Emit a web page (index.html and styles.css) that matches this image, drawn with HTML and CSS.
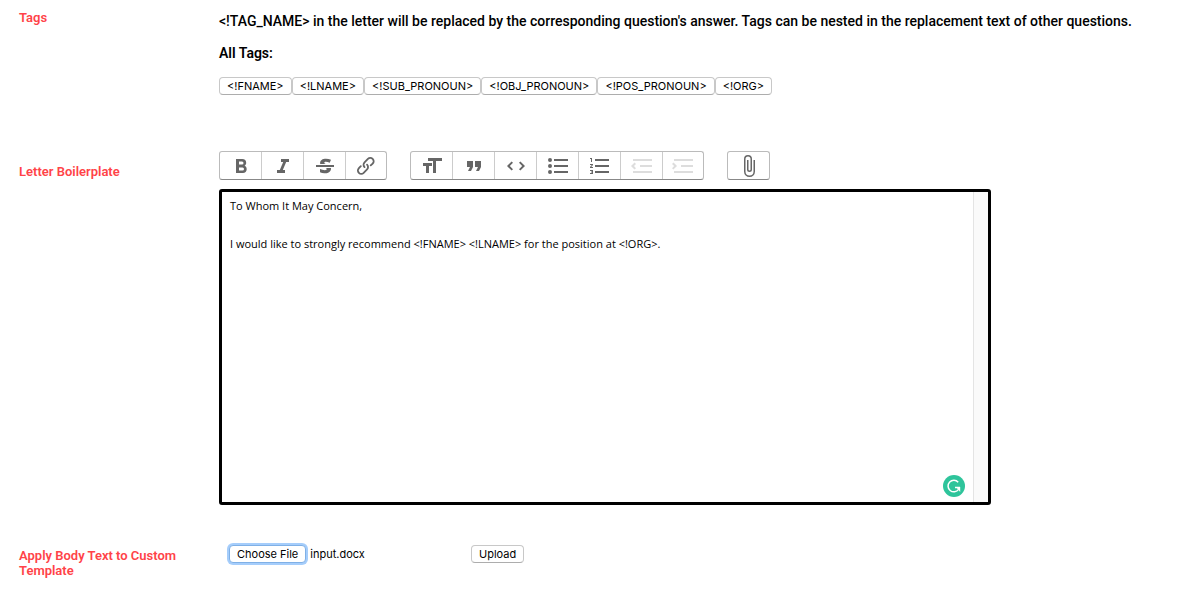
FILE: index.html
```html
<!DOCTYPE html>
<html lang="en">
<head>
<meta charset="utf-8">
<title>Letter Template</title>
<link rel="stylesheet" href="styles.css">
</head>
<body>
<form class="form">
  <section class="row row-tags">
    <h2 class="row-label">Tags</h2>
    <div class="row-body">
      <p class="help">&lt;!TAG_NAME&gt; in the letter will be replaced by the corresponding question's answer. Tags can be nested in the replacement text of other questions.</p>
      <p class="help help-strong">All Tags:</p>
      <div class="tags">
        <button type="button" class="btn">&lt;!FNAME&gt;</button>
        <button type="button" class="btn">&lt;!LNAME&gt;</button>
        <button type="button" class="btn">&lt;!SUB_PRONOUN&gt;</button>
        <button type="button" class="btn">&lt;!OBJ_PRONOUN&gt;</button>
        <button type="button" class="btn">&lt;!POS_PRONOUN&gt;</button>
        <button type="button" class="btn">&lt;!ORG&gt;</button>
      </div>
    </div>
  </section>

  <section class="row row-letter">
    <label class="row-label" for="letter">Letter Boilerplate</label>
    <div class="row-body">
      <div class="toolbar">
        <div class="group">
          <button type="button" class="tool" aria-label="Bold"><svg class="icon" viewBox="0 0 24 24"><path d="M15.6 11.8c1-.7 1.6-1.8 1.6-2.8a4 4 0 0 0-4-4H7v14h7c2.1 0 3.7-1.7 3.7-3.8 0-1.5-.8-2.8-2.1-3.4zM10 7.5h3a1.5 1.5 0 1 1 0 3h-3v-3zm3.5 9H10v-3h3.5a1.5 1.5 0 1 1 0 3z"/></svg></button>
          <button type="button" class="tool" aria-label="Italic"><svg class="icon" viewBox="0 0 24 24"><path d="M10 5v3h2.2l-3.4 8H6v3h8v-3h-2.2l3.4-8H18V5z"/></svg></button>
          <button type="button" class="tool" aria-label="Strikethrough"><svg class="icon" viewBox="0 0 24 24"><path d="M12.73 14l.28.14c.26.15.45.3.57.44.12.14.18.3.18.5 0 .3-.15.56-.44.75-.3.2-.76.3-1.39.3A13.52 13.52 0 0 1 7 14.95v3.37a10.64 10.64 0 0 0 4.84.88c1.26 0 2.35-.19 3.28-.56.93-.37 1.64-.9 2.14-1.57s.74-1.45.74-2.32c0-.26-.02-.51-.06-.75h-5.21zm-5.5-4c-.08-.34-.12-.7-.12-1.1 0-1.29.52-2.3 1.58-3.02 1.05-.72 2.5-1.08 4.34-1.08 1.62 0 3.28.34 4.97 1l-1.3 2.93c-1.47-.6-2.73-.9-3.8-.9-.55 0-.96.08-1.2.26-.26.17-.38.38-.38.64 0 .27.16.52.48.74.17.12.53.3 1.05.53H7.23zM3 13h18v-2H3v2z"/></svg></button>
          <button type="button" class="tool" aria-label="Link"><svg class="icon" viewBox="0 0 24 24"><path d="M9.88 13.7a4.3 4.3 0 0 1 0-6.07l3.37-3.37a4.26 4.26 0 0 1 6.07 0 4.3 4.3 0 0 1 0 6.06l-1.96 1.72a.91.91 0 1 1-1.3-1.3l1.97-1.71a2.46 2.46 0 0 0-3.48-3.48l-3.38 3.37a2.46 2.46 0 0 0 0 3.48.91.91 0 1 1-1.3 1.3z"/><path d="M4.25 19.46a4.3 4.3 0 0 1 0-6.07l1.93-1.9a.91.91 0 1 1 1.3 1.3l-1.93 1.9a2.46 2.46 0 0 0 3.48 3.48l3.37-3.38c.96-.96.96-2.52 0-3.48a.91.91 0 1 1 1.3-1.3 4.3 4.3 0 0 1 0 6.07l-3.38 3.38a4.26 4.26 0 0 1-6.07 0z"/></svg></button>
        </div>
        <div class="group">
          <button type="button" class="tool" aria-label="Heading"><svg class="icon" viewBox="0 0 24 24"><path d="M12 9v3H9v7H6v-7H3V9h9zM8 4h14v3h-6v12h-3V7H8V4z"/></svg></button>
          <button type="button" class="tool" aria-label="Quote"><svg class="icon" viewBox="0 0 24 24"><path d="M6 17h3l2-4V7H5v6h3zm8 0h3l2-4V7h-6v6h3z"/></svg></button>
          <button type="button" class="tool" aria-label="Code"><svg class="icon" viewBox="0 0 24 24"><path d="M18.2 12L15 15.2l1.4 1.4L21 12l-4.6-4.6L15 8.8l3.2 3.2zM5.8 12L9 8.8 7.6 7.4 3 12l4.6 4.6L9 15.2 5.8 12z"/></svg></button>
          <button type="button" class="tool" aria-label="Bullets"><svg class="icon" viewBox="0 0 24 24"><path d="M4 4a2 2 0 1 0 0 4 2 2 0 0 0 0-4zm0 6a2 2 0 1 0 0 4 2 2 0 0 0 0-4zm0 6a2 2 0 1 0 0 4 2 2 0 0 0 0-4zm4 3h14v-2H8v2zm0-6h14v-2H8v2zm0-8v2h14V5H8z"/></svg></button>
          <button type="button" class="tool" aria-label="Numbers"><svg class="icon" viewBox="0 0 24 24"><path d="M2 17h2v.5H3v1h1v.5H2v1h3v-4H2v1zm1-9h1V4H2v1h1v3zm-1 3h1.8L2 13.1v.9h3v-1H3.2L5 10.9V10H2v1zm5-6v2h14V5H7zm0 14h14v-2H7v2zm0-6h14v-2H7v2z"/></svg></button>
          <button type="button" class="tool" aria-label="Decrease level" disabled><svg class="icon" viewBox="0 0 24 24"><path d="M3 19h19v-2H3v2zm7-6h12v-2H10v2zm-8.3-.3l2.8 2.9L6 14.2 4 12l2-2-1.4-1.5L1 12l.7.7zM3 5v2h19V5H3z"/></svg></button>
          <button type="button" class="tool" aria-label="Increase level" disabled><svg class="icon" viewBox="0 0 24 24"><path d="M3 19h19v-2H3v2zm7-6h12v-2H10v2zm-6.9-1L1 14.2l1.4 1.4L6 12l-.7-.7-2.8-2.8L1 9.9 3.1 12zM3 5v2h19V5H3z"/></svg></button>
        </div>
        <div class="group">
          <button type="button" class="tool" aria-label="Attach files"><svg class="icon" viewBox="0 0 24 24"><path d="M16.5 6v11.5a4 4 0 1 1-8 0V5a2.5 2.5 0 0 1 5 0v10.5a1 1 0 1 1-2 0V6H10v9.5a2.5 2.5 0 0 0 5 0V5a4 4 0 1 0-8 0v12.5a5.5 5.5 0 0 0 11 0V6h-1.5z"/></svg></button>
        </div>
      </div>
      <div class="editor">
        <textarea class="editor-text" id="letter" rows="16" spellcheck="false">To Whom It May Concern,

I would like to strongly recommend &lt;!FNAME&gt; &lt;!LNAME&gt; for the position at &lt;!ORG&gt;.</textarea>
        <div class="editor-track"></div>
        <svg class="checker" viewBox="0 0 22 22" role="img" aria-label="Writing checker"><circle cx="11" cy="11" r="11" fill="#2ec49b"/><path d="M15.2 7.2A5.8 5.8 0 1 0 15.6 14.4M12 12.6H17" fill="none" stroke="#fff" stroke-width="1.5"/><path d="M13 12H17.2V17L15.6 15Z" fill="#fff"/></svg>
      </div>
    </div>
  </section>

  <section class="row row-file">
    <h2 class="row-label">Apply Body Text to Custom Template</h2>
    <div class="row-body upload">
      <div class="file">
        <input class="file-input" type="file" id="template">
        <label class="btn file-btn" for="template">Choose File</label>
        <span class="file-name">input.docx</span>
      </div>
      <button type="button" class="btn">Upload</button>
    </div>
  </section>
</form>
</body>
</html>
```

FILE: styles.css
```css
* {
  box-sizing: border-box;
}

body {
  margin: 0;
  background: #fff;
  color: #000;
  font-family: Roboto, "Liberation Sans", sans-serif;
  font-size: 14px;
}

.form {
  padding: 10px 8px 24px 19px;
}

.row {
  display: grid;
  grid-template-columns: 176px minmax(0, 1fr);
  column-gap: 24px;
}

.row-label {
  margin: 0;
  color: #ff4348;
  font-size: 13px;
  font-weight: 600;
  line-height: 15px;
}

.row-tags .row-body {
  padding-top: 1px;
}

.row-letter {
  margin-top: 56px;
}

.row-letter .row-label {
  padding-top: 13px;
}

.row-file {
  margin-top: 38px;
}

.row-file .row-label {
  padding-top: 5px;
}

.help {
  margin: 0 0 12px;
  font-weight: 500;
  line-height: 20px;
}

.help-strong {
  font-weight: 600;
  margin-bottom: 14px;
}

.tags {
  display: flex;
  flex-wrap: wrap;
}

.btn {
  height: 18px;
  padding: 0 7px;
  border: 1px solid #c8c8c8;
  border-bottom-color: #adadad;
  border-radius: 4px;
  background: #fff;
  color: #000;
  font-family: Inter, "Liberation Sans", sans-serif;
  font-size: 11px;
  line-height: 16px;
}

.toolbar {
  display: flex;
  flex-wrap: wrap;
  gap: 23px;
  margin-bottom: 9px;
}

.group {
  display: flex;
  border: 1px solid #bbb;
  border-bottom-color: #888;
  border-radius: 3px;
}

.tool {
  display: flex;
  align-items: center;
  justify-content: center;
  width: 42px;
  height: 27px;
  padding: 0;
  border: 0;
  border-left: 1px solid #ccc;
  background: transparent;
  color: #666;
}

.tool:first-child {
  width: 41px;
  border-left: 0;
}

.tool:last-child {
  width: 41px;
}

.tool:disabled {
  color: #ddd;
}

.icon {
  width: 24px;
  height: 24px;
  fill: currentColor;
}

.editor {
  position: relative;
  display: flex;
  max-width: 772px;
  border: 3px solid #000;
  border-radius: 3px;
}

.editor-text {
  flex: 1;
  min-width: 0;
  padding: 4px 8px 2px;
  border: 0;
  outline: 0;
  resize: none;
  background: #fff;
  color: #000;
  font-family: "Open Sans", "Liberation Sans", sans-serif;
  font-size: 11px;
  font-weight: 500;
  line-height: 19px;
}

.editor-track {
  width: 15px;
  border-left: 1px solid #e4e4e4;
  background: #fafafa;
}

.checker {
  position: absolute;
  right: 23px;
  bottom: 5px;
  width: 22px;
  height: 22px;
}

.upload {
  display: flex;
  align-items: flex-start;
  padding: 2px 0 0 10px;
}

.file {
  position: relative;
  display: flex;
  align-items: center;
  gap: 4px;
  width: 242px;
}

.file-input {
  position: absolute;
  width: 1px;
  height: 1px;
  opacity: 0;
}

.file-btn {
  border-color: #7fb0e6;
  box-shadow: 0 0 0 2px #a5cdfb;
}

.file-name {
  font-family: Inter, "Liberation Sans", sans-serif;
  font-size: 11px;
  line-height: 18px;
}
```
